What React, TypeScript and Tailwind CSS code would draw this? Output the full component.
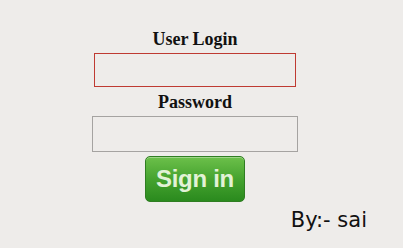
export default function App() {
    return (
        <div className="w-[403px] h-[248px] bg-[#eeecea] flex flex-col">
            <div className="flex flex-col items-center pt-[29px] pr-[13px]">
                <h2 className="text-[18px] leading-[20px] font-bold text-[#111] font-['Liberation_Serif',serif]">
                    User Login
                </h2>
                <input
                    type="text"
                    className="mt-[4px] w-[202px] h-[34px] border border-[#bf3a32] bg-[#eeecea] outline-none"
                />
                <h2 className="mt-[5px] text-[18px] leading-[20px] font-bold text-[#111] font-['Liberation_Serif',serif]">
                    Password
                </h2>
                <input
                    type="password"
                    className="mt-[4px] w-[206px] h-[36px] border border-[#a5a3a1] bg-[#eeecea] outline-none"
                />
                <button className="mt-[4px] w-[100px] h-[46px] rounded-[5px] border border-[#2f7d22] bg-gradient-to-b from-[#6cc04a] via-[#45a32f] to-[#2a8a1e] shadow-[inset_0_1px_0_rgba(255,255,255,0.35)] text-[24px] leading-[24px] font-bold text-[#e2f2d6] tracking-[-0.3px] font-['Liberation_Sans',Arial,sans-serif]">
                    Sign in
                </button>
            </div>
            <div className="self-end mr-[36px] mt-[6px] text-[21px] leading-[24px] text-[#111] font-['DejaVu_Sans',sans-serif]">
                By:- sai
            </div>
        </div>
    )
}
